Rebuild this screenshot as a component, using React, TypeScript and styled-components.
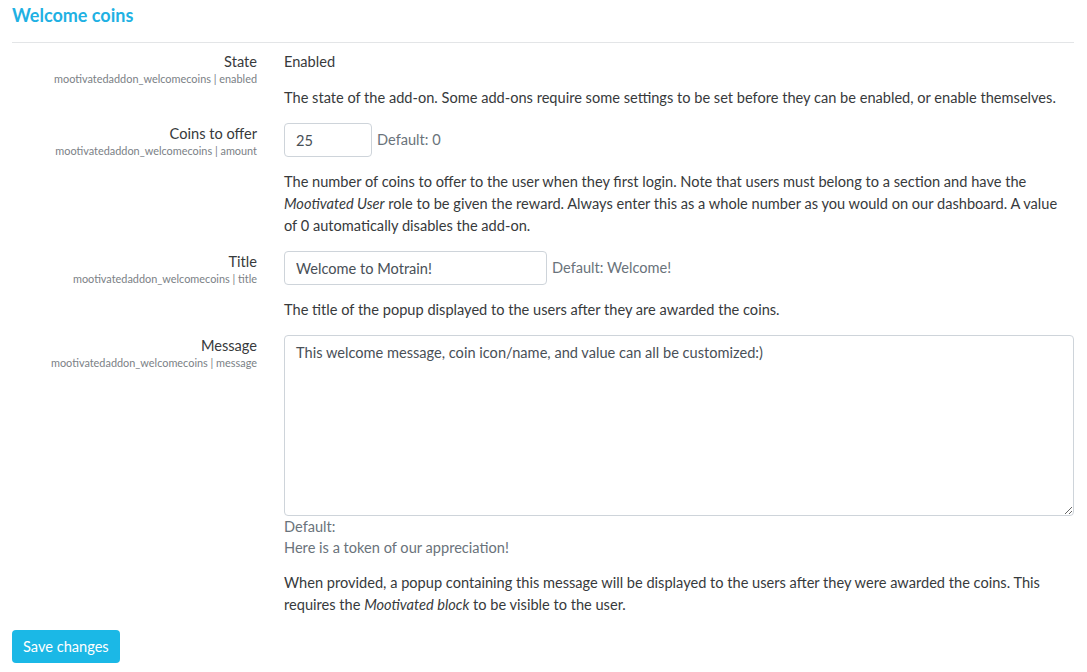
import React from 'react';
import styled, { createGlobalStyle } from 'styled-components';

const GlobalStyle = createGlobalStyle`
    body {
        margin: 0;
        background: #FFFFFF;
        font-family: Lato, "Liberation Sans", sans-serif;
        font-size: 14.6px;
        line-height: 22px;
        color: #373a3c;
    }
`;

const Page = styled.div`
    padding: 0 13px 0 12px;
`;

const Heading = styled.h3`
    margin: 0;
    padding: 4px 0 15px;
    font-size: 18px;
    line-height: 23px;
    font-weight: 700;
    color: #1fb1e3;
    border-bottom: 1px solid #e3e5e7;
`;

const Form = styled.form`
    padding-top: 8px;
`;

const Row = styled.div`
    display: grid;
    grid-template-columns: 245px 1fr;
    column-gap: 27px;
    margin-bottom: 14px;
`;

const LabelCol = styled.div`
    display: flex;
    flex-direction: column;
    align-items: flex-end;
    text-align: right;
`;

const Label = styled.label`
    font-size: 14.6px;
    line-height: 22px;
`;

const SettingName = styled.span`
    font-size: 10.9px;
    line-height: 12px;
    color: #7b8186;
`;

const Value = styled.div`
    line-height: 22px;
`;

const InputRow = styled.div`
    display: flex;
    align-items: center;
    gap: 5px;
`;

const TextInput = styled.input`
    box-sizing: border-box;
    width: ${p => p.$width}px;
    height: 34px;
    padding: 0 11px;
    border: 1px solid #ced4da;
    border-radius: 4px;
    font-family: inherit;
    font-size: 14.6px;
    color: #495057;
    background: #FFFFFF;
    outline: none;
`;

const TextArea = styled.textarea`
    display: block;
    box-sizing: border-box;
    width: 100%;
    height: 181px;
    padding: 6px 11px;
    border: 1px solid #ced4da;
    border-radius: 4px;
    font-family: inherit;
    font-size: 14.6px;
    line-height: 22px;
    color: #495057;
    outline: none;
`;

const DefaultText = styled.span`
    color: #6a737b;
`;

const DefaultBlock = styled.div`
    color: #6a737b;
    line-height: 21px;
`;

const Description = styled.div`
    margin-top: 14px;
    line-height: 22px;
`;

const SaveButton = styled.button`
    height: 33px;
    padding: 0 11px;
    border: none;
    border-radius: 4px;
    background: #1bb8e6;
    color: #FFFFFF;
    font-family: inherit;
    font-size: 14.6px;
    cursor: pointer;
`;

const Setting: React.FC<any> = ({ label, name, children }) => (
    <Row>
        <LabelCol>
            <Label>{label}</Label>
            <SettingName>mootivatedaddon_welcomecoins | {name}</SettingName>
        </LabelCol>
        <div>{children}</div>
    </Row>
);

const App: React.FC = () => {
    return (
        <Page>
            <GlobalStyle />
            <Heading>Welcome coins</Heading>
            <Form onSubmit={e => e.preventDefault()}>
                <Setting label="State" name="enabled">
                    <Value>Enabled</Value>
                    <Description>
                        The state of the add-on. Some add-ons require some settings to be set before they can be enabled, or enable themselves.
                    </Description>
                </Setting>

                <Setting label="Coins to offer" name="amount">
                    <InputRow>
                        <TextInput $width={88} defaultValue="25" />
                        <DefaultText>Default: 0</DefaultText>
                    </InputRow>
                    <Description>
                        The number of coins to offer to the user when they first login. Note that users must belong to a section and have the<br />
                        <em>Mootivated User</em> role to be given the reward. Always enter this as a whole number as you would on our dashboard. A value<br />
                        of 0 automatically disables the add-on.
                    </Description>
                </Setting>

                <Setting label="Title" name="title">
                    <InputRow>
                        <TextInput $width={263} defaultValue="Welcome to Motrain!" />
                        <DefaultText>Default: Welcome!</DefaultText>
                    </InputRow>
                    <Description>
                        The title of the popup displayed to the users after they are awarded the coins.
                    </Description>
                </Setting>

                <Setting label="Message" name="message">
                    <TextArea defaultValue="This welcome message, coin icon/name, and value can all be customized:)" />
                    <DefaultBlock>
                        Default:<br />
                        Here is a token of our appreciation!
                    </DefaultBlock>
                    <Description>
                        When provided, a popup containing this message will be displayed to the users after they were awarded the coins. This<br />
                        requires the <em>Mootivated block</em> to be visible to the user.
                    </Description>
                </Setting>

                <SaveButton type="submit">Save changes</SaveButton>
            </Form>
        </Page>
    );
};

export default App;
